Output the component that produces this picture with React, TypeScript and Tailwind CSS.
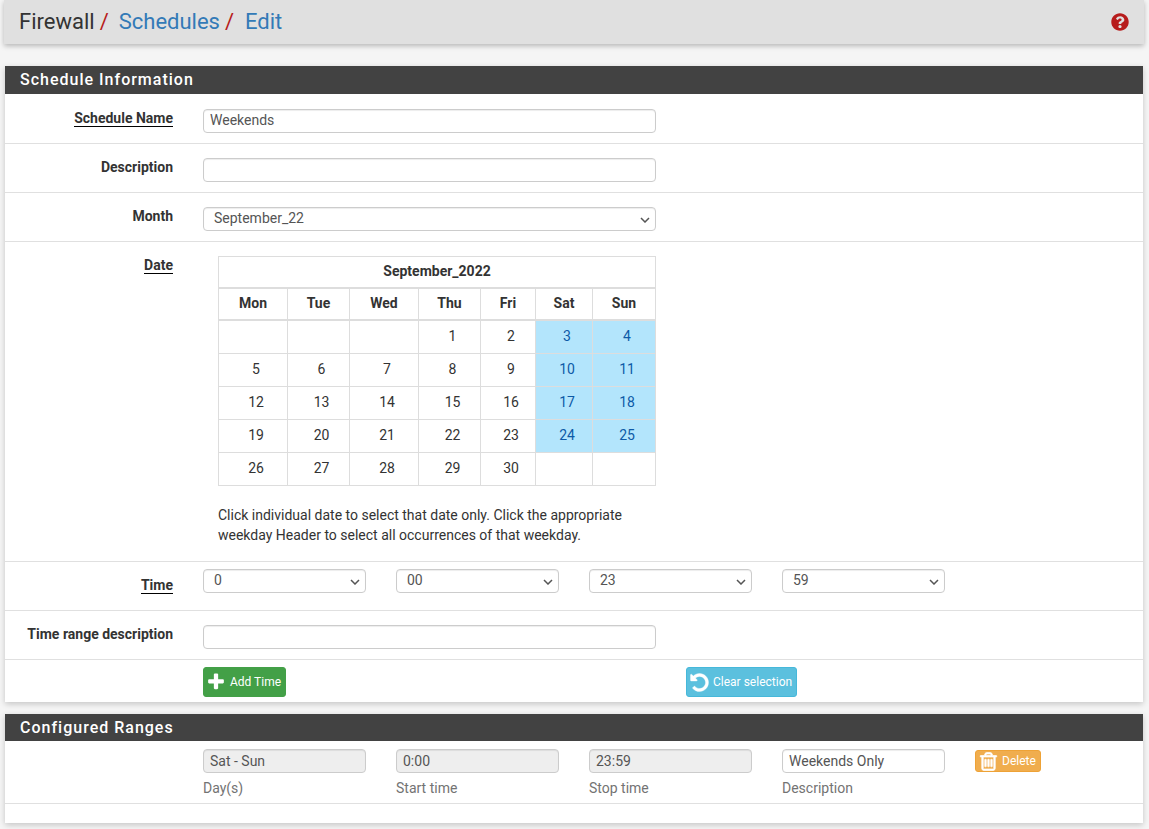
import React from "react";
import { FaQuestionCircle } from "react-icons/fa";

const inputBase =
  "h-[24px] rounded-[4px] border border-[#cccccc] text-[14px] text-[#555555] outline-none shadow-[inset_0_1px_1px_rgba(0,0,0,0.075)]";
const inputCls = `${inputBase} bg-white px-[6px] pb-[2px]`;

function Row({ label, underline, first, children, h = "h-[49px]" }: { label?: string; underline?: boolean; first?: boolean; children: React.ReactNode; h?: string }) {
  return (
    <div className={`flex ${first ? "" : "border-t border-[#e0e0e0]"} ${h}`}>
      <div className={`w-[168px] shrink-0 text-right text-[14px] font-bold leading-[20px] text-[#333333] ${first ? "pt-[14px]" : "pt-[13px]"}`}>
        {label && <span className={underline ? "border-b border-black" : ""}>{label}</span>}
      </div>
      <div className={`ml-[30px] min-w-0 flex-1 ${first ? "pt-[15px]" : "pt-[14px]"}`}>{children}</div>
    </div>
  );
}

function Select({ value, w }: { value: string; w: string }) {
  return (
    <div className={`relative ${w}`}>
      <select defaultValue={value} className={`${inputCls} block w-full appearance-none pl-[10px]`}>
        <option>{value}</option>
      </select>
      <svg
        viewBox="0 0 10 6"
        className="pointer-events-none absolute right-[6px] top-[10px] h-[6px] w-[10px] text-[#555555]"
        fill="none"
        stroke="currentColor"
        strokeWidth="1.5"
      >
        <path d="M1 1l4 4 4-4" />
      </svg>
    </div>
  );
}

const rows: (number | null)[][] = [
  [null, null, null, 1, 2, 3, 4],
  [5, 6, 7, 8, 9, 10, 11],
  [12, 13, 14, 15, 16, 17, 18],
  [19, 20, 21, 22, 23, 24, 25],
  [26, 27, 28, 29, 30, null, null],
];
const days = ["Mon", "Tue", "Wed", "Thu", "Fri", "Sat", "Sun"];
const widths = [69, 62, 69, 62, 55, 57, 63];

function Calendar() {
  return (
    <table className="w-[438px] table-fixed border-collapse text-[14px] text-[#333333]">
      <colgroup>
        {widths.map((w, i) => (
          <col key={i} style={{ width: w }} />
        ))}
      </colgroup>
      <thead>
        <tr className="h-[31px]">
          <th colSpan={7} className="border border-[#dddddd] border-b-2 p-0 font-bold">September_2022</th>
        </tr>
        <tr className="h-[32px]">
          {days.map((d) => (
            <th key={d} className="border border-[#dddddd] border-b-2 p-0 font-bold">{d}</th>
          ))}
        </tr>
      </thead>
      <tbody>
        {rows.map((r, i) => (
          <tr key={i} className={i === 0 ? "h-[34px]" : "h-[33px]"}>
            {r.map((c, j) => {
              const blue = j >= 5 && c !== null;
              return (
                <td key={j} className={`border border-[#dddddd] p-0 pl-[6px] text-center ${i === 0 ? "" : "pb-[2px]"} ${blue ? "bg-[#b3e5fc] text-[#0d5aa7]" : ""}`}>
                  {c}
                </td>
              );
            })}
          </tr>
        ))}
      </tbody>
    </table>
  );
}

function Heading({ children, h }: { children: React.ReactNode; h: string }) {
  return (
    <div className={`flex ${h} items-center bg-[#424242] pl-[15px] text-[16px] font-medium tracking-[1px] text-white`}>
      {children}
    </div>
  );
}

const panelShadow = "shadow-[0_2px_6px_rgba(0,0,0,0.2)]";

export default function App() {
  return (
    <div className="min-h-[829px] bg-[#f5f5f5] font-['Roboto',sans-serif] text-[14px]">
      <div className="ml-[4px] mr-[5px]">
        <div className="flex h-[44px] items-center justify-between bg-[#e0e0e0] pl-[15px] pr-[15px] shadow-[0_2px_5px_rgba(0,0,0,0.26)]">
          <div className="flex items-center text-[22px] leading-[24px]">
            <span className="text-[#333333]">Firewall</span>
            <span className="ml-[5px] text-[#b71c1c]">/</span>
            <span className="ml-[10px] text-[#337ab7]">Schedules</span>
            <span className="ml-[5px] text-[#b71c1c]">/</span>
            <span className="ml-[11px] text-[#337ab7]">Edit</span>
          </div>
          <FaQuestionCircle className="h-[18px] w-[18px] text-[#b71c1c]" />
        </div>
      </div>

      <div className={`ml-[5px] mr-[6px] mt-[22px] bg-white ${panelShadow}`}>
        <Heading h="h-[28px]">Schedule Information</Heading>
        <Row label="Schedule Name" underline first>
          <input readOnly value="Weekends" className={`${inputCls} block w-[453px]`} />
        </Row>
        <Row label="Description">
          <input readOnly value="" className={`${inputCls} block w-[453px]`} />
        </Row>
        <Row label="Month">
          <Select value="September_22" w="w-[453px]" />
        </Row>
        <Row label="Date" underline h="h-[320px]">
          <div className="ml-[15px] w-[438px]">
            <Calendar />
            <p className="mt-[19px] w-[420px] text-[14px] leading-[20px] text-[#333333]">
              Click individual date to select that date only. Click the appropriate weekday Header to select all occurrences of that weekday.
            </p>
          </div>
        </Row>
        <div className="flex h-[49px] border-t border-[#e0e0e0]">
          <div className="w-[168px] shrink-0 pt-[13px] text-right font-bold leading-[20px] text-[#333333]">
            <span className="border-b border-black">Time</span>
          </div>
          <div className="ml-[30px] flex gap-[30px] pt-[7px]">
            <Select value="0" w="w-[163px]" />
            <Select value="00" w="w-[163px]" />
            <Select value="23" w="w-[163px]" />
            <Select value="59" w="w-[163px]" />
          </div>
        </div>
        <Row label="Time range description">
          <input readOnly value="" className={`${inputCls} block w-[453px]`} />
        </Row>
        <div className="flex h-[43px] border-t border-[#e0e0e0]">
          <div className="ml-[198px] w-[483px] pt-[7px]">
            <button className="flex h-[30px] w-[83px] items-center rounded-[3px] border border-[#43a047] bg-[#43a047] pl-[2px] text-[12px] text-white">
              <svg viewBox="0 0 1792 1792" fill="currentColor" className="mr-[4px] h-[20px] w-[20px]">
                <path d="M1600 736v192q0 40-28 68t-68 28h-416v416q0 40-28 68t-68 28h-192q-40 0-68-28t-28-68v-416h-416q-40 0-68-28t-28-68v-192q0-40 28-68t68-28h416v-416q0-40 28-68t68-28h192q40 0 68 28t28 68v416h416q40 0 68 28t28 68z" />
              </svg>
              Add Time
            </button>
          </div>
          <div className="pt-[7px]">
            <button className="flex h-[30px] w-[111px] items-center rounded-[3px] border border-[#46b8da] bg-[#5bc0de] pl-[2px] text-[12px] text-white">
              <svg viewBox="0 0 1792 1792" fill="currentColor" stroke="currentColor" strokeWidth="30" className="mr-[3px] h-[21px] w-[21px]">
                <path d="M1664 896q0 156-61 298t-164 245-245 164-298 61q-172 0-327-72.5t-264-204.5q-7-10-6.5-22.5t8.5-20.5l137-138q10-9 25-9 16 2 23 12 73 95 179 147t225 52q104 0 198.5-40.5t163.5-109.5 109.5-163.5 40.5-198.5-40.5-198.5-109.5-163.5-163.5-109.5-198.5-40.5q-98 0-188 35.5t-160 101.5l137 138q31 30 14 69-17 40-59 40h-448q-26 0-45-19t-19-45v-448q0-42 40-59 39-17 69 14l130 129q107-101 244.5-156.5t284.5-55.5q156 0 298 61t245 164 164 245 61 298z" />
              </svg>
              Clear selection
            </button>
          </div>
        </div>
      </div>

      <div className={`ml-[5px] mr-[6px] mt-[12px] bg-white ${panelShadow}`}>
        <Heading h="h-[27px]">Configured Ranges</Heading>
        <div className="flex h-[63px] gap-[30px] border-b border-[#e0e0e0] pl-[198px] pt-[8px]">
          {[
            ["Sat - Sun", "Day(s)", true],
            ["0:00", "Start time", true],
            ["23:59", "Stop time", true],
            ["Weekends Only", "Description", false],
          ].map(([v, l, ro]) => (
            <div key={l as string} className="w-[163px]">
              <input
                readOnly
                value={v as string}
                className={`${inputBase} block w-[163px] px-[6px] ${ro ? "bg-[#eeeeee]" : "bg-white"}`}
              />
              <div className="mt-[5px] leading-[20px] text-[#737373]">{l as string}</div>
            </div>
          ))}
          <div className="pt-[1px]">
            <button className="flex h-[22px] w-[66px] items-center rounded-[3px] border border-[#eea236] bg-[#f0ad4e] pl-[2px] text-[12px] text-white">
              <svg viewBox="0 0 1792 1792" fill="currentColor" stroke="currentColor" strokeWidth="60" className="mr-[3px] h-[21px] w-[21px] shrink-0">
                <path d="M704 736v576q0 14-9 23t-23 9h-64q-14 0-23-9t-9-23v-576q0-14 9-23t23-9h64q14 0 23 9t9 23zm256 0v576q0 14-9 23t-23 9h-64q-14 0-23-9t-9-23v-576q0-14 9-23t23-9h64q14 0 23 9t9 23zm256 0v576q0 14-9 23t-23 9h-64q-14 0-23-9t-9-23v-576q0-14 9-23t23-9h64q14 0 23 9t9 23zm128 724v-948h-896v948q0 22 7 40.5t14.5 27 10.5 8.5h832q3 0 10.5-8.5t14.5-27 7-40.5zm-672-1076h448l-48-117q-7-9-17-11h-317q-10 2-17 11zm928 32v64q0 14-9 23t-23 9h-96v948q0 83-47 143.5t-113 60.5h-832q-66 0-113-58.5t-47-141.5v-952h-96q-14 0-23-9t-9-23v-64q0-14 9-23t23-9h309l70-167q15-37 54-63t79-26h320q40 0 79 26t54 63l70 167h309q14 0 23 9t9 23z" />
              </svg>
              Delete
            </button>
          </div>
        </div>
        <div className="h-[19px]" />
      </div>
    </div>
  );
}
